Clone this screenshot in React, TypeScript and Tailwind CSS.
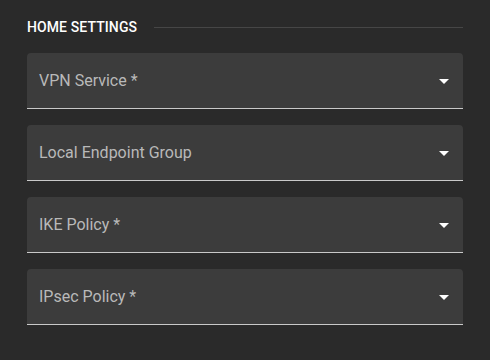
import { ChevronDown } from 'lucide-react'

const fields = ['VPN Service *', 'Local Endpoint Group', 'IKE Policy *', 'IPsec Policy *']

function SelectField({ label }: { label: string }) {
    return (
        <div className="relative h-[56px] rounded-t-[4px] bg-[#3c3c3c] border-b border-[#c9c9c9] flex items-center pl-[12px] pr-[32px] cursor-pointer">
            <span className="text-[16px] text-[#b9b9b9] leading-none">{label}</span>
            <svg
                viewBox="0 0 24 24"
                className="absolute right-[7px] top-[16px] w-[24px] h-[24px] fill-white"
                aria-hidden="true"
            >
                <path d="M7 10l5 5 5-5z" />
            </svg>
        </div>
    )
}

export default function App() {
    return (
        <div className="min-h-[360px] bg-[#2a2a2a] px-[27px] pt-[17px] font-['Roboto',sans-serif]">
            <div className="flex items-center h-[20px] gap-[17px]">
                <h2 className="text-[14px] font-medium text-white tracking-[0.1px] whitespace-nowrap">HOME SETTINGS</h2>
                <div className="flex-1 h-px bg-[#464646]" />
            </div>
            <div className="mt-[16px] flex flex-col gap-[16px]">
                {fields.map((f) => (
                    <SelectField key={f} label={f} />
                ))}
            </div>
        </div>
    )
}
